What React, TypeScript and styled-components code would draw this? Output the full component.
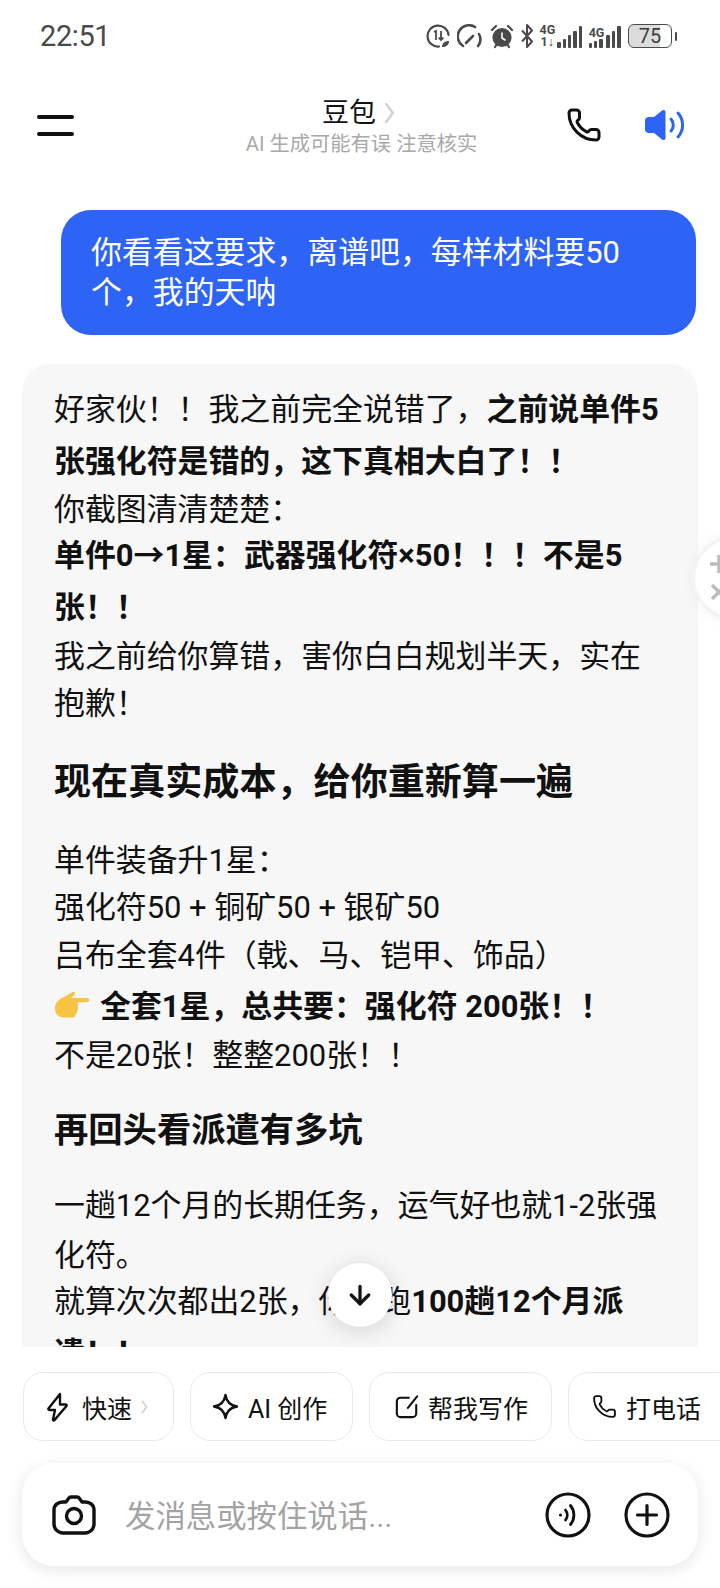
import React from 'react';
import styled, { createGlobalStyle } from 'styled-components';
import { ArrowDown, Phone } from 'lucide-react';

const GlobalStyle = createGlobalStyle`
    html, body {
        margin: 0;
        padding: 0;
        background: #ffffff;
    }
    * {
        box-sizing: border-box;
    }
`

// chat copy uses full-width punctuation
const zh = (text: string) =>
    text
        .replace(/,/g, '\uFF0C')
        .replace(/!/g, '\uFF01')
        .replace(/:/g, '\uFF1A')
        .replace(/\(/g, '\uFF08')
        .replace(/\)/g, '\uFF09')

const Screen = styled.div`
    position: relative;
    width: 720px;
    height: 1588px;
    display: flex;
    flex-direction: column;
    overflow: hidden;
    background: #ffffff;
    color: #111111;
    font-family: "Roboto", "Noto Sans CJK SC", sans-serif;
`
const StatusBar = styled.div`
    height: 70px;
    flex: none;
    display: flex;
    align-items: center;
    justify-content: space-between;
    padding: 2px 43px 0 40px;
`
const Clock = styled.span`
    font-family: "Roboto", "Liberation Sans", sans-serif;
    font-size: 29px;
    letter-spacing: -0.4px;
    color: #4a4a4a;
`
const StatusIcons = styled.div`
    display: flex;
    align-items: center;
    gap: 6.5px;
    color: #4a4a4a;
`
const SignalWrap = styled.div`
    display: flex;
    align-items: flex-end;
    gap: 2px;
    height: 24px;
`
const NetLabel = styled.div`
    display: flex;
    flex-direction: column;
    font-family: "Roboto", "Liberation Sans", sans-serif;
    font-weight: 700;
    font-size: 12.5px;
    line-height: 12px;
    text-align: center;
`
const Bars = styled.div`
    display: flex;
    align-items: flex-end;
    gap: 2px;
`
const Bar = styled.div<{ $h: number }>`
    width: 3.4px;
    height: ${(p) => p.$h}px;
    background: #4a4a4a;
    border-radius: 1px;
`
const Battery = styled.div`
    width: 44px;
    height: 24px;
    border: 1.5px solid #4a4a4a;
    border-radius: 6px;
    overflow: hidden;
    margin-left: 1px;
    display: flex;
    align-items: center;
    justify-content: center;
    font-family: "Roboto", "Liberation Sans", sans-serif;
    font-size: 20px;
    color: #3c3c3c;
    background: linear-gradient(to right, #dcdcdc 75%, #ffffff 75%);
`
const BatteryTip = styled.div`
    width: 2.5px;
    height: 9px;
    margin-left: -4px;
    background: #4a4a4a;
    border-radius: 1px;
`

const Header = styled.div`
    height: 90px;
    flex: none;
    display: grid;
    grid-template-columns: 1fr auto 1fr;
    align-items: center;
    padding: 20px 34px 0 37px;
`
const Menu = styled.div`
    display: flex;
    flex-direction: column;
    gap: 13px;
`
const MenuLine = styled.div`
    width: 37px;
    height: 4px;
    border-radius: 2px;
    background: #111111;
`
const HeaderCenter = styled.div`
    display: flex;
    flex-direction: column;
    align-items: center;
`
const TitleRow = styled.div`
    display: flex;
    align-items: center;
    gap: 8px;
    font-size: 27px;
    line-height: 36px;
    margin-left: -6px;
`
const SubTitle = styled.div`
    margin-top: 1px;
    font-size: 20.3px;
    line-height: 24px;
    color: #a9a9a9;
`
const HeaderActions = styled.div`
    display: flex;
    align-items: center;
    justify-content: flex-end;
    gap: 43px;
`

const Chat = styled.div`
    flex: 1;
    min-height: 0;
    overflow: hidden;
    padding: 50px 22px 0;
    display: flex;
    flex-direction: column;
    gap: 29px;
`
const UserBubble = styled.div`
    flex: none;
    align-self: flex-end;
    width: 635px;
    margin-right: 2px;
    padding: 23px 50px 22px 30px;
    border-radius: 30px;
    background: #2e64f6;
    color: #ffffff;
    font-size: 30.9px;
    line-height: 40px;
`
const AiBubble = styled.div`
    flex: none;
    padding: 20px 32px 40px;
    border-radius: 28px;
    background: #f7f7f7;
    font-size: 30.9px;
    line-height: 47.5px;
`
const Paragraph = styled.p<{ $mt?: number; $lh?: number }>`
    margin: ${(p) => p.$mt ?? 0}px 0 0;
    ${(p) => (p.$lh ? `line-height: ${p.$lh}px;` : '')}
`
const Strong = styled.strong`
    font-weight: 700;
    line-height: 52px;
`
const H2 = styled.h2`
    margin: 31px 0 30px;
    font-size: 37.1px;
    line-height: 48px;
    font-weight: 700;
`
const H3 = styled.h3`
    margin: 26px 0 27px;
    font-size: 34.3px;
    line-height: 48px;
    font-weight: 700;
`
const PointingHand = styled.svg`
    width: 36px;
    height: 30px;
    margin-right: 10px;
    vertical-align: -4px;
`

const ScrollDown = styled.div`
    position: absolute;
    left: 328px;
    top: 1263px;
    width: 64px;
    height: 64px;
    border-radius: 50%;
    background: #ffffff;
    box-shadow: 0 4px 24px rgba(0, 0, 0, 0.14);
    display: flex;
    align-items: center;
    justify-content: center;
    color: #111111;
`
const FloatTool = styled.div`
    position: absolute;
    left: 692px;
    top: 536px;
    width: 84px;
    height: 84px;
    border-radius: 50%;
    background: #ffffff;
    border: 3px solid #f3f3f3;
    box-shadow: 0 0 14px rgba(0, 0, 0, 0.05);
`
const FloatGlyphs = styled.svg`
    display: block;
    margin: 14px 0 0 14px;
`

const Chips = styled.div`
    flex: none;
    display: flex;
    gap: 16px;
    padding: 25px 0 0 23px;
    overflow: hidden;
`
const Chip = styled.div<{ $w: number; $pad: number }>`
    flex: none;
    height: 69px;
    display: flex;
    align-items: center;
    gap: 9px;
    padding-left: ${(p) => p.$pad}px;
    width: ${(p) => p.$w}px;
    border: 1.5px solid #e9e9e9;
    border-radius: 20px;
    background: #ffffff;
    font-size: 25px;
    color: #111111;
    white-space: nowrap;
`
const Chevron = styled.svg`
    flex: none;
`

const InputCard = styled.div`
    flex: none;
    height: 103px;
    margin: 22px 22px 22px;
    padding: 0 30px;
    display: flex;
    align-items: center;
    border-radius: 32px;
    background: #ffffff;
    box-shadow: 0 4px 16px rgba(0, 0, 0, 0.1);
`
const Placeholder = styled.span`
    flex: 1;
    margin: -1px 0 0 29px;
    font-size: 30.4px;
    color: #a3a3a3;
`
const InputActions = styled.div`
    display: flex;
    align-items: center;
    gap: 33px;
    margin-right: -2px;
`

const StatusGlyphs = () => (
    <>
        <svg width="24" height="24" viewBox="0 0 24 24" fill="none" stroke="#4a4a4a" strokeWidth="2.2">
            <path d="M13 22.500A10.500 10.500 0 1 1 22.500 11" strokeLinecap="round" />
            <path d="M8 8l2-1v9" strokeWidth="1.8" />
            <path d="M15 7v9M12.600 13.600L15 16l2.400-2.400" strokeWidth="1.8" />
            <path d="M16 23c0-4 3-6 7-6 0 4-3 6-7 6z" fill="#4a4a4a" stroke="none" />
        </svg>
        <svg width="27" height="24" viewBox="0 0 27 24" fill="none" stroke="#4a4a4a" strokeWidth="2.6" strokeLinecap="round">
            <path d="M6 22A11 11 0 0 1 18 3" />
            <path d="M22 10a11 11 0 0 1-1 12" />
            <path d="M9 19l7-7" />
        </svg>
        <svg width="24" height="25" viewBox="0 0 24 25" fill="#4a4a4a" stroke="#4a4a4a" strokeWidth="2.2" strokeLinecap="round">
            <circle cx="12" cy="13.500" r="8.500" />
            <path d="M2 6l4-4M22 6l-4-4M5 23l2-3M19 23l-2-3" />
            <path d="M12 9v5l3 2" stroke="#ffffff" strokeWidth="1.6" fill="none" />
        </svg>
        <svg width="12" height="24" viewBox="0 0 12 24" fill="none" stroke="#4a4a4a" strokeWidth="2">
            <path d="M1 6.500l10 11L6 23V1l5 5.500L1 17.500" strokeLinejoin="round" />
        </svg>
        <SignalWrap>
            <NetLabel>
                <span>4G</span>
                <span>1↓</span>
            </NetLabel>
            <Bars>
                {[6, 9, 13, 17, 22].map((h) => (
                    <Bar key={h} $h={h} />
                ))}
            </Bars>
        </SignalWrap>
        <SignalWrap>
            <NetLabel>
                <span>4G</span>
                <Bars>
                    {[5, 7, 9].map((h) => (
                        <Bar key={h} $h={h} />
                    ))}
                </Bars>
            </NetLabel>
            <Bars>
                {[13, 17, 22].map((h) => (
                    <Bar key={h} $h={h} />
                ))}
            </Bars>
        </SignalWrap>
        <Battery>75</Battery>
        <BatteryTip />
    </>
)

const Speaker = () => (
    <svg width="41" height="34" viewBox="0 0 41 34" fill="none">
        <path d="M17 2.500c1.600-1.200 3.500-.5 3.500 1.800v25.400c0 2.300-1.900 3-3.500 1.800L9 25H4a4 4 0 0 1-4-4v-8a4 4 0 0 1 4-4h5z" fill="#2e64f6" />
        <path d="M26 11a9 9 0 0 1 0 12" stroke="#2e64f6" strokeWidth="3" strokeLinecap="round" />
        <path d="M33 5a18 18 0 0 1 0 24" stroke="#2e64f6" strokeWidth="3" strokeLinecap="round" />
    </svg>
)

const Bolt = () => (
    <svg width="27" height="30" viewBox="0 0 27 30" fill="none" stroke="#111" strokeWidth="2.400" strokeLinejoin="round">
        <path d="M14 2L2.500 16.500c-.5.7 0 1.500.8 1.500H9l-2 9.500c-.2.9.8 1.300 1.400.6L20.500 14c.5-.7 0-1.500-.8-1.500H14z" />
    </svg>
)

const Sparkle = () => (
    <svg width="27" height="27" viewBox="0 0 27 27" fill="none" stroke="#111" strokeWidth="2.400" strokeLinejoin="round">
        <path d="M13.500 2c1 6.500 4.500 10.500 11.500 11.500-7 1-10.500 5-11.500 11.500C12.500 18.500 9 14.500 2 13.500 9 12.500 12.500 8.500 13.500 2z" />
    </svg>
)

const WritePad = () => (
    <svg width="24" height="26" viewBox="0 0 26 26" fill="none" stroke="#111" strokeWidth="2.300" strokeLinecap="round">
        <path d="M15 3H6a4 4 0 0 0-4 4v13a4 4 0 0 0 4 4h13a4 4 0 0 0 4-4v-9" />
        <path d="M24 1.500L14 14" />
    </svg>
)

const Camera = () => (
    <svg width="44" height="40" viewBox="0 0 44 40" fill="none" stroke="#111" strokeWidth="3.400" strokeLinejoin="round">
        <path d="M14 7l2.500-3.500c.6-.9 1.500-1.500 2.500-1.500h6c1 0 1.900.6 2.500 1.500L30 7h3.500C38 7 42 10 42 15v14c0 5-4 9-9 9H11c-5 0-9-4-9-9V15c0-5 4-8 8.500-8z" />
        <circle cx="22" cy="21" r="7.500" />
    </svg>
)

const VoiceCircle = () => (
    <svg width="46" height="46" viewBox="0 0 46 46" fill="none" stroke="#111" strokeWidth="3.200" strokeLinecap="round">
        <circle cx="23" cy="23" r="21" />
        <circle cx="15.500" cy="23" r="1.600" fill="#111" stroke="none" />
        <path d="M20.500 18a8 8 0 0 1 0 10" strokeWidth="2.800" />
        <path d="M25.500 13.500a15 15 0 0 1 0 19" strokeWidth="2.800" />
    </svg>
)

const PlusCircle = () => (
    <svg width="46" height="46" viewBox="0 0 46 46" fill="none" stroke="#111" strokeWidth="3.200" strokeLinecap="round">
        <circle cx="23" cy="23" r="21" />
        <path d="M23 13.500v19M13.500 23h19" />
    </svg>
)

const SmallChevron = ({ color, w, h }: { color: string; w: number; h: number }) => (
    <Chevron width={w} height={h} viewBox="0 0 10 20" fill="none" stroke={color} strokeWidth="2.500" strokeLinecap="round" strokeLinejoin="round">
        <path d="M2 2l6 8-6 8" />
    </Chevron>
)

const App: React.FC = () => {
    return (
        <Screen>
            <GlobalStyle />
            <StatusBar>
                <Clock>22:51</Clock>
                <StatusIcons>
                    <StatusGlyphs />
                </StatusIcons>
            </StatusBar>
            <Header>
                <Menu>
                    <MenuLine />
                    <MenuLine />
                </Menu>
                <HeaderCenter>
                    <TitleRow>
                        豆包
                        <SmallChevron color="#d4d4d4" w={11} h={22} />
                    </TitleRow>
                    <SubTitle>AI 生成可能有误 注意核实</SubTitle>
                </HeaderCenter>
                <HeaderActions>
                    <Phone size={36} strokeWidth={2} color="#111111" />
                    <Speaker />
                </HeaderActions>
            </Header>
            <Chat>
                <UserBubble>{zh('你看看这要求,离谱吧,每样材料要50个,我的天呐')}</UserBubble>
                <AiBubble>
                    <Paragraph>
                        {zh('好家伙!!我之前完全说错了,')}
                        <Strong>{zh('之前说单件5张强化符是错的,这下真相大白了!!')}</Strong>
                    </Paragraph>
                    <Paragraph $mt={-2}>{zh('你截图清清楚楚:')}</Paragraph>
                    <Paragraph $mt={-4}>
                        <Strong>{zh('单件0→1星:武器强化符×50!!!不是5张!!')}</Strong>
                    </Paragraph>
                    <Paragraph $mt={-1}>{zh('我之前给你算错,害你白白规划半天,实在抱歉!')}</Paragraph>
                    <H2>{zh('现在真实成本,给你重新算一遍')}</H2>
                    <Paragraph>
                        {zh('单件装备升1星:')}
                        <br />
                        强化符50 + 铜矿50 + 银矿50
                        <br />
                        {zh('吕布全套4件(戟、马、铠甲、饰品)')}
                    </Paragraph>
                    <Paragraph $mt={2}>
                        <PointingHand viewBox="0 0 36 30">
                            <path
                                d="M1 17c0-5 4-9 9-11 3-1 6-4 9-5 2-.5 3 1 1.500 2.500L17 7l16 0c3 0 3 4 0 4l-10 .5c1.500 1 1.500 3 .5 4 1 1 1 3-.5 4 .5 1.500 0 3-1.500 3.500 0 2-1 3.500-3 3.500H10C4 26.500 1 23 1 17z"
                                fill="#f6c342"
                            />
                        </PointingHand>
                        <Strong>{zh('全套1星,总共要:强化符 200张!!')}</Strong>
                    </Paragraph>
                    <Paragraph $mt={-1}>{zh('不是20张!整整200张!!')}</Paragraph>
                    <H3>再回头看派遣有多坑</H3>
                    <Paragraph $lh={50}>{zh('一趟12个月的长期任务,运气好也就1-2张强化符。')}</Paragraph>
                    <Paragraph $mt={-5}>
                        {zh('就算次次都出2张,你得跑')}
                        <Strong>{zh('100趟12个月派遣!!')}</Strong>
                    </Paragraph>
                </AiBubble>
            </Chat>
            <Chips>
                <Chip $w={151} $pad={22}>
                    <Bolt />
                    快速
                    <SmallChevron color="#d4d4d4" w={7} h={16} />
                </Chip>
                <Chip $w={163} $pad={21}>
                    <Sparkle />
                    AI 创作
                </Chip>
                <Chip $w={183} $pad={25}>
                    <WritePad />
                    帮我写作
                </Chip>
                <Chip $w={170} $pad={23}>
                    <Phone size={25} strokeWidth={1.8} />
                    打电话
                </Chip>
            </Chips>
            <InputCard>
                <Camera />
                <Placeholder>发消息或按住说话...</Placeholder>
                <InputActions>
                    <VoiceCircle />
                    <PlusCircle />
                </InputActions>
            </InputCard>
            <ScrollDown>
                <ArrowDown size={30} strokeWidth={2.6} />
            </ScrollDown>
            <FloatTool>
                <FloatGlyphs width="20" height="50" viewBox="0 0 20 50" stroke="#bdbdbd" strokeWidth="3.500">
                    <path d="M10 2v18M1 11h18" />
                    <path d="M3 32l14 14M17 32L3 46" />
                </FloatGlyphs>
            </FloatTool>
        </Screen>
    )
}
export default App
